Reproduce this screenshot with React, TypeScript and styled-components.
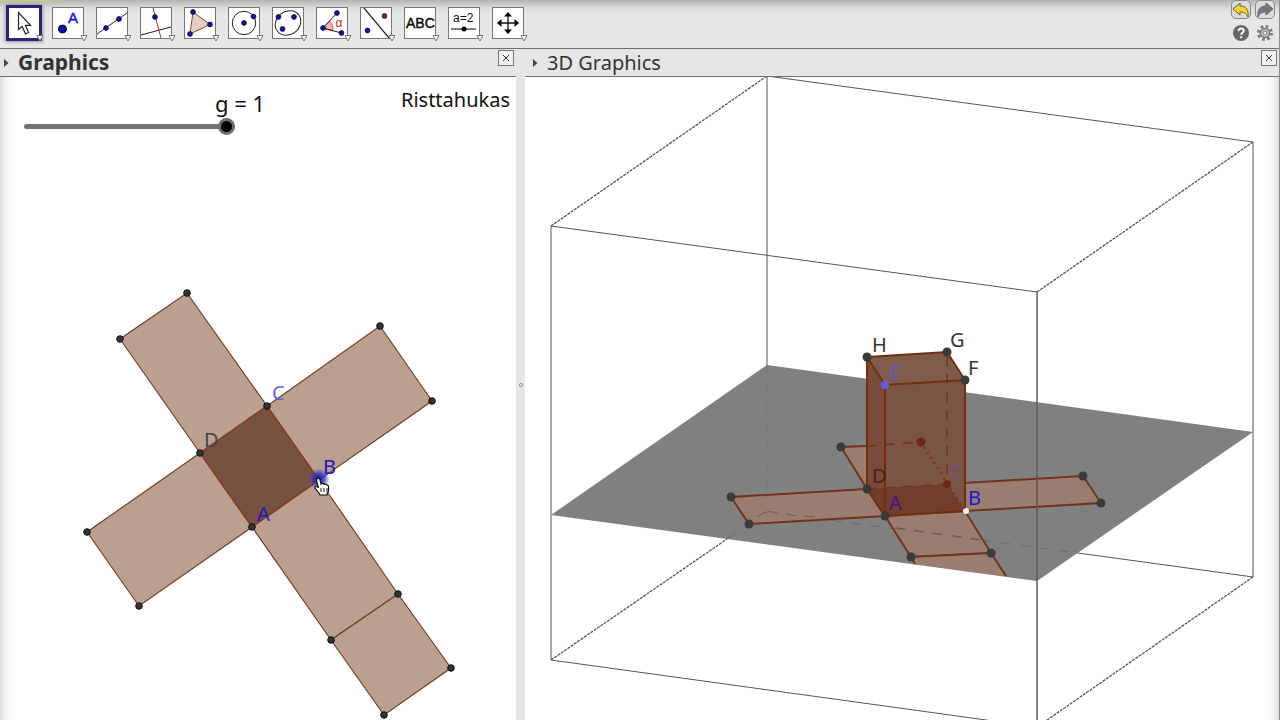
import React, { useState } from "react";
import styled, { createGlobalStyle } from "styled-components";

const GlobalStyle = createGlobalStyle`
  *, *::before, *::after { box-sizing: border-box; }
  body {
    margin: 0;
    background: #fff;
    color: #111;
    font-family: "Noto Sans", "Open Sans", sans-serif;
  }
`;

const Page = styled.div`
  display: flex;
  flex-direction: column;
  min-height: 100vh;
  border-right: 1px solid #8c8c8c;
`;

const Toolbar = styled.header`
  display: flex;
  justify-content: space-between;
  align-items: flex-start;
  height: 49px;
  padding: 0 4px 0 8px;
  border-bottom: 1px solid #6e6e6e;
  background:
    linear-gradient(to right, #c8cc50, #d0d468 60%, transparent) 0 0 / 66px 1px no-repeat,
    linear-gradient(#b4b4b4, #dcdcdc 8px, #e7e7e7 16px);
`;

const Tools = styled.div`
  display: flex;
  gap: 12px;
  padding-top: 7px;
`;

const ToolButton = styled.button<{ $active?: boolean }>`
  position: relative;
  width: 32px;
  height: 32px;
  padding: 0;
  border: 1px solid #777;
  background: #fff;
  outline: ${(p) => (p.$active ? "3px solid #2c2470" : "none")};
  outline-offset: -1px;
  box-shadow: ${(p) => (p.$active ? "0 0 3px 3px #9a9a9a" : "none")};

  svg { display: block; }
`;

const MenuMark = styled.svg`
  position: absolute;
  right: -5px;
  bottom: -4px;
`;

const Actions = styled.div`
  display: grid;
  grid-template-columns: 20px 20px;
  gap: 4px;
`;

const ActionButton = styled.button<{ $framed?: boolean }>`
  width: 20px;
  height: 19px;
  padding: 0;
  border: ${(p) => (p.$framed ? "1px solid #888" : "0")};
  border-radius: 5px;
  background: ${(p) => (p.$framed ? "#dcdcdc" : "transparent")};

  svg { display: block; margin: auto; }
`;

const Workspace = styled.main`
  flex: 1;
  display: grid;
  grid-template-columns: 516fr 9px 754fr;
`;

const Panel = styled.section`
  display: flex;
  flex-direction: column;
  min-width: 0;
`;

const PanelHeader = styled.div<{ $strong?: boolean }>`
  display: flex;
  align-items: flex-start;
  height: 28px;
  padding: 0 2px 0 ${(p) => (p.$strong ? 4 : 8)}px;
  border-bottom: 1px solid #6e6e6e;
  background: #e6e6e6;
`;

const Disclosure = styled.button`
  width: 6px;
  height: 27px;
  padding: 0;
  border: 0;
  background: transparent;

  svg { display: block; }
`;

const PanelTitle = styled.h2<{ $strong?: boolean }>`
  flex: 1;
  margin: 0;
  padding-left: 8px;
  font-size: ${(p) => (p.$strong ? 21 : 20)}px;
  line-height: 27px;
  font-weight: ${(p) => (p.$strong ? 700 : 400)};
  color: #333;
`;

const CloseButton = styled.button`
  width: 16px;
  height: 16px;
  margin-top: 1px;
  padding: 0;
  border: 1px solid #777;
  background: #f2f2f2;

  svg { display: block; }
`;

const Splitter = styled.div`
  display: flex;
  align-items: center;
  justify-content: center;
  background: linear-gradient(#e6e6e6, #e6e6e6) 0 0 / 100% 27px no-repeat, #e5e5e5;
`;

const Grip = styled.span`
  width: 4px;
  height: 4px;
  border: 1px solid #888;
  border-radius: 2px;
  background: #fff;
`;

const Canvas = styled.div<{ $edge: "left" | "right" }>`
  position: relative;
  flex: 1;
  overflow: hidden;
  background: linear-gradient(to ${(p) => (p.$edge === "left" ? "right" : "left")}, #dedede, #f6f6f6 6px, #fff 16px) #fff;
`;

const Drawing = styled.svg`
  position: absolute;
  inset: 0;
  width: 100%;
  height: 100%;
  font-size: 20px;
`;

const Overlay = styled.div`
  position: relative;
  display: flex;
  justify-content: space-between;
  align-items: flex-start;
  padding: 8px 6px 0 24px;
  font-size: 20px;
  line-height: 30px;
`;

const SliderField = styled.div`
  display: flex;
  flex-direction: column;
  padding-top: 4px;
  line-height: 28px;

  label {
    padding-left: 191px;
    font-size: 22px;
  }
`;

const Slider = styled.input`
  appearance: none;
  width: 211px;
  height: 18px;
  margin: 0;
  background: transparent;

  &::-webkit-slider-runnable-track {
    height: 5px;
    border-radius: 3px;
    background: #737373;
  }
  &::-webkit-slider-thumb {
    appearance: none;
    width: 17px;
    height: 17px;
    margin-top: -6px;
    border: 3px solid #6e6e6e;
    border-radius: 50%;
    background: #000;
  }
`;

const Caption = styled.p`
  margin: 0;
`;

type Point = [number, number];
const pts = (list: Point[]) => list.map((p) => p.join(",")).join(" ");

const dot = (x: number, y: number, fill = "#14149a") => (
  <circle cx={x} cy={y} r="2.4" fill={fill} stroke="#050530" strokeWidth="0.8" />
);

const tools: { name: string; icon: React.ReactNode }[] = [
  {
    name: "Move",
    icon: <path d="M9.500 4.500V21.500L13.200 18.500L16.500 26L19.500 24.500L16.500 17.300H21.500Z" fill="#fff" stroke="#222" strokeWidth="1.200" />,
  },
  {
    name: "Point",
    icon: (
      <>
        <circle cx="9.500" cy="21" r="4" fill="#14149a" stroke="#050530" />
        <text x="15" y="15" fontSize="15" fill="#1c1cc8" stroke="#1c1cc8" strokeWidth="0.500" fontFamily="Liberation Sans, sans-serif">A</text>
      </>
    ),
  },
  {
    name: "Line",
    icon: (<><path d="M0 26L30 5" stroke="#222" />{dot(9, 20)}{dot(22, 11)}</>),
  },
  {
    name: "Perpendicular line",
    icon: (<><path d="M0 27L30 19" stroke="#222" strokeWidth="1.200" /><path d="M12 0L20 30" stroke="#c22a2a" />{dot(14, 9)}</>),
  },
  {
    name: "Polygon",
    icon: (<><path d="M8 4L25 16.500L5 26Z" fill="#e3cfc2" stroke="#7d4b38" />{dot(8, 4)}{dot(25, 16.5)}{dot(5, 26)}</>),
  },
  {
    name: "Circle with centre",
    icon: (<><circle cx="15" cy="15" r="11.700" fill="none" stroke="#222" />{dot(15, 15)}{dot(24.5, 8.5)}</>),
  },
  {
    name: "Conic",
    icon: (<><ellipse cx="15" cy="15" rx="13.500" ry="11.500" transform="rotate(-38 15 15)" fill="none" stroke="#222" />{dot(5.5, 9)}{dot(21, 9)}{dot(9.5, 21)}</>),
  },
  {
    name: "Angle",
    icon: (
      <>
        <path d="M6 20L12.500 13A10 10 0 0 1 15.500 23Z" fill="#f7b3b3" stroke="#d44" />
        <path d="M20 5L6 20L24.500 25" fill="none" stroke="#222" />
        <text x="18.500" y="19" fontSize="12" fill="#c22" fontFamily="Liberation Sans, sans-serif">α</text>
        {dot(20, 5)}{dot(6, 20)}{dot(24.5, 25)}
      </>
    ),
  },
  {
    name: "Reflect",
    icon: (<><path d="M3 0L28 30" stroke="#222" strokeWidth="1.200" />{dot(23.5, 8, "#8a2030")}{dot(6.5, 22.5)}</>),
  },
  {
    name: "Text",
    icon: <text x="1" y="20" fontSize="14" textAnchor="start" fill="#111" stroke="#111" strokeWidth="0.500" fontFamily="Liberation Sans, sans-serif">ABC</text>,
  },
  {
    name: "Slider",
    icon: (
      <>
        <text x="4" y="14" fontSize="12" fill="#111" fontFamily="Liberation Sans, sans-serif">a=2</text>
        <path d="M2 21H27" stroke="#555" strokeWidth="1.500" /><circle cx="15" cy="21" r="2.500" />
      </>
    ),
  },
  {
    name: "Move view",
    icon: (
      <>
        <path d="M6 15H24M15 6V24" stroke="#111" strokeWidth="1.300" />
        <path d="M15 4L19 8.500H11ZM15 26L19 21.500H11ZM4 15L8.500 11V19ZM26 15L21.500 11V19Z" fill="#000" />
      </>
    ),
  },
];

const arms: Point[][] = [
  [[200, 376], [120, 262], [187, 216], [267, 329]],
  [[267, 329], [380, 249], [432, 324], [319, 403]],
  [[200, 376], [87, 455], [139, 529], [252, 450]],
  [[252, 450], [331, 563], [398, 517], [319, 403]],
  [[331, 563], [384, 638], [451, 591], [398, 517]],
];

const netPoints: Point[] = [
  [120, 262], [187, 216], [267, 329], [200, 376], [252, 450], [380, 249],
  [432, 324], [87, 455], [139, 529], [331, 563], [398, 517], [384, 638], [451, 591],
];

const Triangle = () => (
  <MenuMark width="8" height="8" viewBox="0 0 8 8" aria-hidden="true">
    <path d="M1 1.500H7L4 7Z" fill="#fff" stroke="#777" />
  </MenuMark>
);

function Header({ title, strong }: { title: string; strong?: boolean }) {
  return (
    <PanelHeader $strong={strong}>
      <Disclosure aria-label={`Style bar of ${title}`}>
        <svg width="6" height="26" viewBox="0 0 6 26"><path d="M0 9L4.500 13L0 17Z" fill="#444" /></svg>
      </Disclosure>
      <PanelTitle $strong={strong}>{title}</PanelTitle>
      <CloseButton aria-label={`Close ${title}`}>
        <svg width="14" height="14" viewBox="0 0 14 14"><path d="M4 4L10 10M10 4L4 10" stroke="#333" /></svg>
      </CloseButton>
    </PanelHeader>
  );
}

function Net() {
  return (
    <Drawing role="img" aria-label="Net of the cuboid">
      <defs>
        <radialGradient id="glow">
          <stop offset="0" stopColor="#1616a0" />
          <stop offset="0.500" stopColor="#3030b8" stopOpacity="0.800" />
          <stop offset="1" stopColor="#5050d0" stopOpacity="0" />
        </radialGradient>
      </defs>
      {arms.map((a) => (
        <polygon key={pts(a)} points={pts(a)} fill="#bba090" stroke="#743f28" strokeWidth="1.200" />
      ))}
      <polygon points="200,376 267,329 319,403 252,450" fill="#775242" stroke="#8a3d22" strokeWidth="1.500" />
      {netPoints.map(([x, y]) => (
        <circle key={`${x}-${y}`} cx={x} cy={y} r="3.300" fill="#333" stroke="#111" />
      ))}
      <circle cx="319" cy="402" r="11" fill="url(#glow)" />
      <text x="204" y="370" fill="#444">D</text>
      <text x="272" y="323" fill="#6a62dc">C</text>
      <text x="323" y="397" fill="#2014c4">B</text>
      <text x="257" y="444" fill="#2014c4">A</text>
      <path
        transform="translate(314 401)"
        d="M3 1C4-.5 6 0 6 2L7 6C8 5 9.500 5 10 6.500C11 5.500 12 6 12.500 7C14 6.500 14.500 8 14.500 9V13L13 16V17H6L5 15L1 10C1 8 3 8 4.500 10L2.500 3Z"
        fill="#fff" stroke="#111" strokeWidth="1.200"
      />
      <path d="M321 411V415M324 411V415M327 411V415" stroke="#222" />
    </Drawing>
  );
}

const cubePoints: Point[] = [
  [867, 357], [947, 352], [965, 380], [867, 489], [885, 516], [841, 447],
  [731, 497], [749, 524], [1083, 476], [1101, 503], [911, 557], [991, 553],
];

function Space() {
  return (
    <Drawing role="img" aria-label="Cuboid folded from its net">
      <g transform="translate(-525 -77)" fill="none">
        <g stroke="#555">
          <path d="M767 76L1253 142M551 226L1037 292M767 76V365M551 226V660M1253 142V577M551 660L1037 727M1078 553L1253 577" />
          <path d="M551 226L767 76M1037 292L1253 142M551 660L727 539M1037 727L1253 577" strokeDasharray="3 1" strokeWidth="1.300" />
        </g>
        <polygon points="767,365 1253,432 1037,581 551,515" fill="#808080" />
        <path d="M767 365V512" stroke="#777" strokeDasharray="10 9" />
        <path d="M727 539L767 512L1078 553" stroke="#6c6c6c" strokeDasharray="10 9" />
        <path d="M1037 292V727" stroke="#5c5c5c" strokeWidth="1.500" />

        <g fill="#9a7d70" stroke="#70341e" strokeWidth="2">
          <polygon points="867,489 731,497 749,524 885,516" />
          <polygon points="947,484 1083,476 1101,503 965,511" />
          <polygon points="885,516 911,557 991,553 965,511" />
          <polygon points="911,557 915,564 1006,576 991,553" stroke="none" />
          <path d="M915 564L911 557L991 553L1006 576" />
          <polygon points="867,489 841,447 867,446" stroke="none" />
          <path d="M867 489L841 447L867 446" />
        </g>
        <path d="M757 517Q768 508 779 514M786 514L796 516M804 516L815 517" stroke="#76584a" />
        <path d="M895 528L982 540" stroke="#76584a" strokeWidth="1.500" strokeDasharray="10 9" />
        <path d="M1037 478V508" stroke="#6b5248" strokeWidth="1.500" />

        <polygon points="867,357 947,352 965,380 965,511 885,516 867,489" fill="#7b5444" />
        <polygon points="867,357 947,352 965,380 885,385" fill="#805c4d" />
        <polygon points="867,357 885,385 885,516 867,489" fill="#7a4b3a" />
        <polygon points="867,489 947,484 965,511 885,516" fill="#733d2c" />
        <path d="M867 489L947 484V352M867 446L921 442" stroke="#70341e" strokeWidth="1.500" strokeDasharray="10 8" />
        <path d="M921 442L965 511" stroke="#70341e" strokeWidth="2" strokeDasharray="2 4" />
        <path d="M867 357L947 352L965 380L885 385ZM867 357V489L885 516L965 511V380M885 385V516" stroke="#70300f" strokeWidth="2" />
        <g stroke="none">
          <circle cx="921" cy="442" r="4.500" fill="#6b2815" />
          <circle cx="947" cy="484" r="4" fill="#6b2815" />
          {cubePoints.map(([x, y]) => (
            <circle key={`${x}-${y}`} cx={x} cy={y} r="4.500" fill="#3a3a38" />
          ))}
          <circle cx="885" cy="385" r="4" fill="#6a5ae0" />
          <circle cx="966" cy="511" r="3" fill="#eee" />
          <text x="872" y="352" fill="#333">H</text>
          <text x="950" y="347" fill="#333">G</text>
          <text x="968" y="375" fill="#333">F</text>
          <text x="889" y="380" fill="#6a55c0">E</text>
          <text x="872" y="483" fill="#4b2415">D</text>
          <text x="950" y="478" fill="#74508c">C</text>
          <text x="889" y="510" fill="#45108a">A</text>
          <text x="968" y="505" fill="#2014d4">B</text>
        </g>
      </g>
    </Drawing>
  );
}

export default function App() {
  const [g, setG] = useState(1);
  const [active, setActive] = useState("Move");
  return (
    <>
      <GlobalStyle />
      <Page>
        <Toolbar>
          <Tools>
            {tools.map((t) => (
              <ToolButton key={t.name} aria-label={t.name} $active={t.name === active} onClick={() => setActive(t.name)}>
                <svg width="30" height="30" viewBox="0 0 30 30" aria-hidden="true">{t.icon}</svg>
                <Triangle />
              </ToolButton>
            ))}
          </Tools>
          <Actions>
            <ActionButton $framed aria-label="Undo">
              <svg width="18" height="16" viewBox="0 0 18 16"><path d="M1 7L8 1V4C14 4 17 8 16 15C14 11 12 10 8 10V13Z" fill="#f2d638" stroke="#6c5c14" /></svg>
            </ActionButton>
            <ActionButton $framed aria-label="Redo">
              <svg width="18" height="16" viewBox="0 0 18 16"><path d="M17 7L10 1V4C4 4 1 8 2 15C4 11 6 10 10 10V13Z" fill="#777" stroke="#666" /></svg>
            </ActionButton>
            <ActionButton aria-label="Help">
              <svg width="18" height="18" viewBox="0 0 18 18">
                <circle cx="9" cy="9" r="8" fill="#666" />
                <path d="M6.500 7C6.500 3.500 12 3.700 11.700 7C11.500 8.700 9.200 8.600 9.200 10.800M9.200 12.300V14.200" fill="none" stroke="#fff" strokeWidth="2" />
              </svg>
            </ActionButton>
            <ActionButton aria-label="Settings">
              <svg width="18" height="18" viewBox="0 0 18 18" fill="none">
                <circle cx="9" cy="9" r="6.500" stroke="#777" strokeWidth="3" strokeDasharray="2.600 2.500" />
                <circle cx="9" cy="9" r="4.500" fill="#ccc" stroke="#777" strokeWidth="1.500" />
                <circle cx="9" cy="9" r="2" fill="#eee" stroke="#777" />
              </svg>
            </ActionButton>
          </Actions>
        </Toolbar>
        <Workspace>
          <Panel>
            <Header title="Graphics" strong />
            <Canvas $edge="left">
              <Net />
              <Overlay>
                <SliderField>
                  <label htmlFor="g">g = {g}</label>
                  <Slider id="g" type="range" min={0} max={1} step={0.1} value={g} onChange={(e) => setG(Number(e.target.value))} />
                </SliderField>
                <Caption>Risttahukas</Caption>
              </Overlay>
            </Canvas>
          </Panel>
          <Splitter><Grip /></Splitter>
          <Panel>
            <Header title="3D Graphics" />
            <Canvas $edge="right"><Space /></Canvas>
          </Panel>
        </Workspace>
      </Page>
    </>
  );
}
